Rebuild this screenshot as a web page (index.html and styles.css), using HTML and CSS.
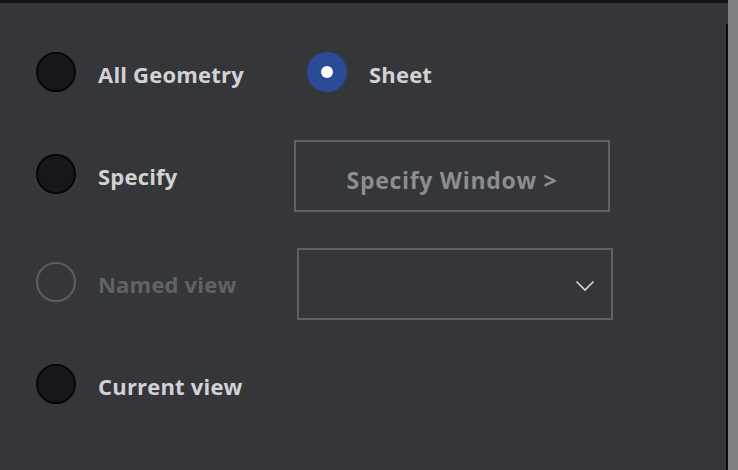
FILE: index.html
```html
<!DOCTYPE html>
<html>
<head>
<meta charset="utf-8">
<link rel="stylesheet" href="styles.css">
</head>
<body>
<div class="frame">
  <div class="main">
    <div class="content">
      <div class="row r1">
        <label class="opt"><span class="radio"></span><span class="lbl">All Geometry</span></label>
        <label class="opt sheet"><span class="radio on"><span class="dot"></span></span><span class="lbl">Sheet</span></label>
      </div>
      <div class="row r2">
        <label class="opt"><span class="radio"></span><span class="lbl">Specify</span></label>
        <button class="btn">Specify Window &gt;</button>
      </div>
      <div class="row r3">
        <label class="opt disabled"><span class="radio"></span><span class="lbl">Named view</span></label>
        <div class="select">
          <svg class="chev" width="20" height="12" viewBox="0 0 20 12"><path d="M1.5 1.5 L10 10 L18.5 1.5" fill="none" stroke="#d6d6d8" stroke-width="1.6"/></svg>
        </div>
      </div>
      <div class="row r4">
        <label class="opt"><span class="radio"></span><span class="lbl">Current view</span></label>
      </div>
    </div>
    <div class="edge"><div class="edge-gap"></div><div class="edge-line"></div></div>
  </div>
  <div class="scroll"></div>
</div>
</body>
</html>
```
FILE: styles.css
```css
* { box-sizing: border-box; }
html, body { margin: 0; padding: 0; }
body {
  width: 738px;
  height: 470px;
  overflow: hidden;
  background: #35363a;
  font-family: "Open Sans", "Noto Sans", sans-serif;
}
.frame {
  display: flex;
  width: 738px;
  height: 470px;
}
.main {
  width: 728px;
  display: flex;
  border-top: 3px solid #111214;
  background: #35363a;
}
.content {
  flex: 1;
  padding: 17px 0 0 36px;
  display: flex;
  flex-direction: column;
}
.edge {
  width: 2px;
  display: flex;
  flex-direction: column;
}
.edge-gap { height: 21px; }
.edge-line { flex: 1; background: #0c0c0e; }
.scroll {
  width: 10px;
  background: #7f8085;
}
.row {
  display: grid;
  grid-template-columns: 258px 1fr;
  align-items: center;
}
.r1 { height: 104px; }
.r2 { height: 103px; }
.r3 { height: 113px; }
.r4 { height: 88px; }
.r2 .opt, .r3 .opt { margin-top: -3px; }
.opt {
  display: flex;
  align-items: center;
  gap: 22px;
}
.radio {
  width: 40px;
  height: 40px;
  border-radius: 50%;
  background: #16171b;
  border: 2px solid #050506;
  display: flex;
  align-items: center;
  justify-content: center;
  flex: none;
}
.radio.on {
  background: #2b4b96;
  border: none;
}
.dot {
  width: 12px;
  height: 12px;
  border-radius: 50%;
  background: #ffffff;
}
.lbl {
  font-size: 22px;
  font-weight: 700;
  color: #d2d2d4;
  letter-spacing: 0.2px;
  padding-top: 4px;
}
.sheet { margin-left: 13px; }
.disabled .radio {
  background: transparent;
  border: 2px solid #5b5c60;
}
.disabled .lbl { color: #616266; }
.btn {
  width: 316px;
  height: 72px;
  background: transparent;
  border: 2px solid #5f6064;
  font-family: inherit;
  font-size: 23px;
  font-weight: 700;
  color: #8c8d90;
  letter-spacing: 0.7px;
  padding: 8px 0 0 0;
}
.select {
  margin-left: 3px;
  width: 316px;
  height: 72px;
  border: 2px solid #606165;
  display: flex;
  align-items: center;
  justify-content: flex-end;
  padding: 5px 16px 0 0;
}
```
